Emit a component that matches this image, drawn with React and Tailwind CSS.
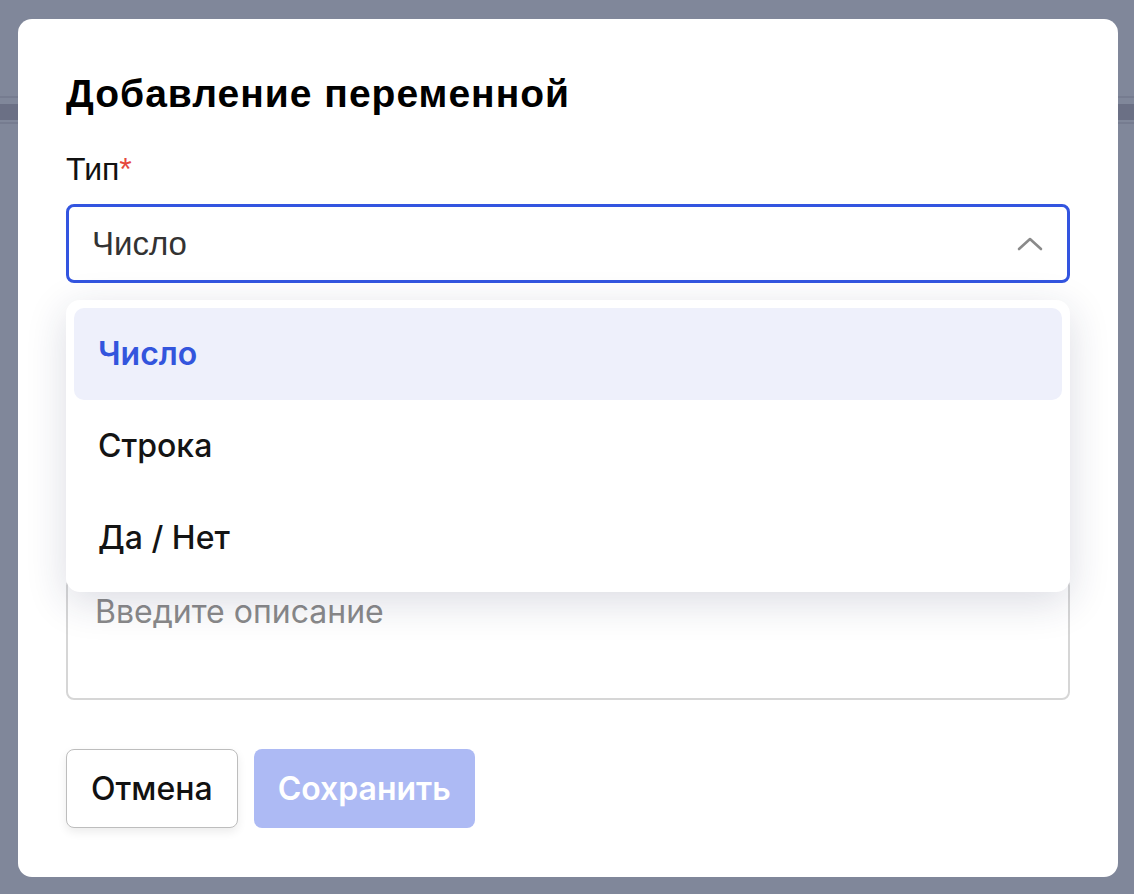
import React from "react";

const arial = { fontFamily: '"Liberation Sans", Arial, sans-serif' };

function ChevronUp() {
  return (
    <svg width="26" height="16" viewBox="0 0 26 16" fill="none">
      <path d="M2 13 L13 3 L24 13" stroke="#8a8a8a" strokeWidth="2.6" strokeLinecap="round" strokeLinejoin="round" />
    </svg>
  );
}

const options = ["Число", "Строка", "Да / Нет"];

export default function App() {
  return (
    <div className="relative w-[1134px] h-[894px] overflow-hidden bg-[#80879a] font-['Inter',sans-serif]">
      {/* dimmed app behind the dialog */}
      <div className="pt-[96px]">
        <div className="h-[2px] bg-[#767c90]" />
        <div className="h-[6px]" />
        <div className="h-[16px] bg-[#6b7085]" />
        <div className="h-[2px]" />
        <div className="h-[2px] bg-[#767c90]" />
      </div>

      {/* dialog */}
      <div className="absolute left-[18px] top-[19px] w-[1100px] h-[858px] rounded-[14px] bg-white px-[48px] pt-[53px]">
        <h2 className="text-[39px] leading-[44px] font-bold text-black tracking-[1px]" style={arial}>
          Добавление переменной
        </h2>

        <div className="mt-[35px] text-[32px] leading-[36px] text-[#111]" style={arial}>
          Тип<span className="text-[#e5483d]">*</span>
        </div>

        <div className="relative mt-[17px]">
          <div className="flex h-[79px] items-center justify-between rounded-[8px] border-[3px] border-[#3355e0] pl-[23px] pr-[24px]">
            <span className="text-[33px] text-[#333]" style={arial}>Число</span>
            <ChevronUp />
          </div>

          {/* open options list */}
          <div className="absolute left-0 right-0 top-[96px] z-10 rounded-[14px] bg-white p-[8px] shadow-[0_10px_40px_rgba(30,40,80,0.16)]">
            {options.map((o, i) => (
              <div
                key={o}
                className={
                  i === 0
                    ? "flex h-[92px] items-center rounded-[10px] bg-[#eef0fb] pl-[24px] text-[32px] font-semibold text-[#3355dd]"
                    : "flex h-[92px] items-center rounded-[10px] pl-[24px] text-[32px] font-medium text-[#141414]"
                }
              >
                {o}
              </div>
            ))}
          </div>
        </div>

        {/* name input, covered by the open list */}
        <div className="mt-[101px] h-[79px] rounded-[8px] border border-[#cfcfcf]" />

        {/* description */}
        <div className="mt-[115px] h-[122px] rounded-[8px] border-2 border-[#d6d6d6] px-[27px] pt-[12px]">
          <div className="text-[32px] leading-[39px] text-[#8a8a8a]">Введите описание</div>
        </div>

        <div className="mt-[49px] flex gap-[16px]">
          <button className="h-[79px] rounded-[8px] border border-[#bdbdbd] bg-white px-[24px] text-[32px] font-medium text-[#111] shadow-[0_4px_10px_rgba(0,0,0,0.08)]">
            Отмена
          </button>
          <button className="h-[79px] rounded-[8px] bg-[#adbaf4] px-[24px] text-[32px] font-semibold text-white">
            Сохранить
          </button>
        </div>
      </div>
    </div>
  );
}
